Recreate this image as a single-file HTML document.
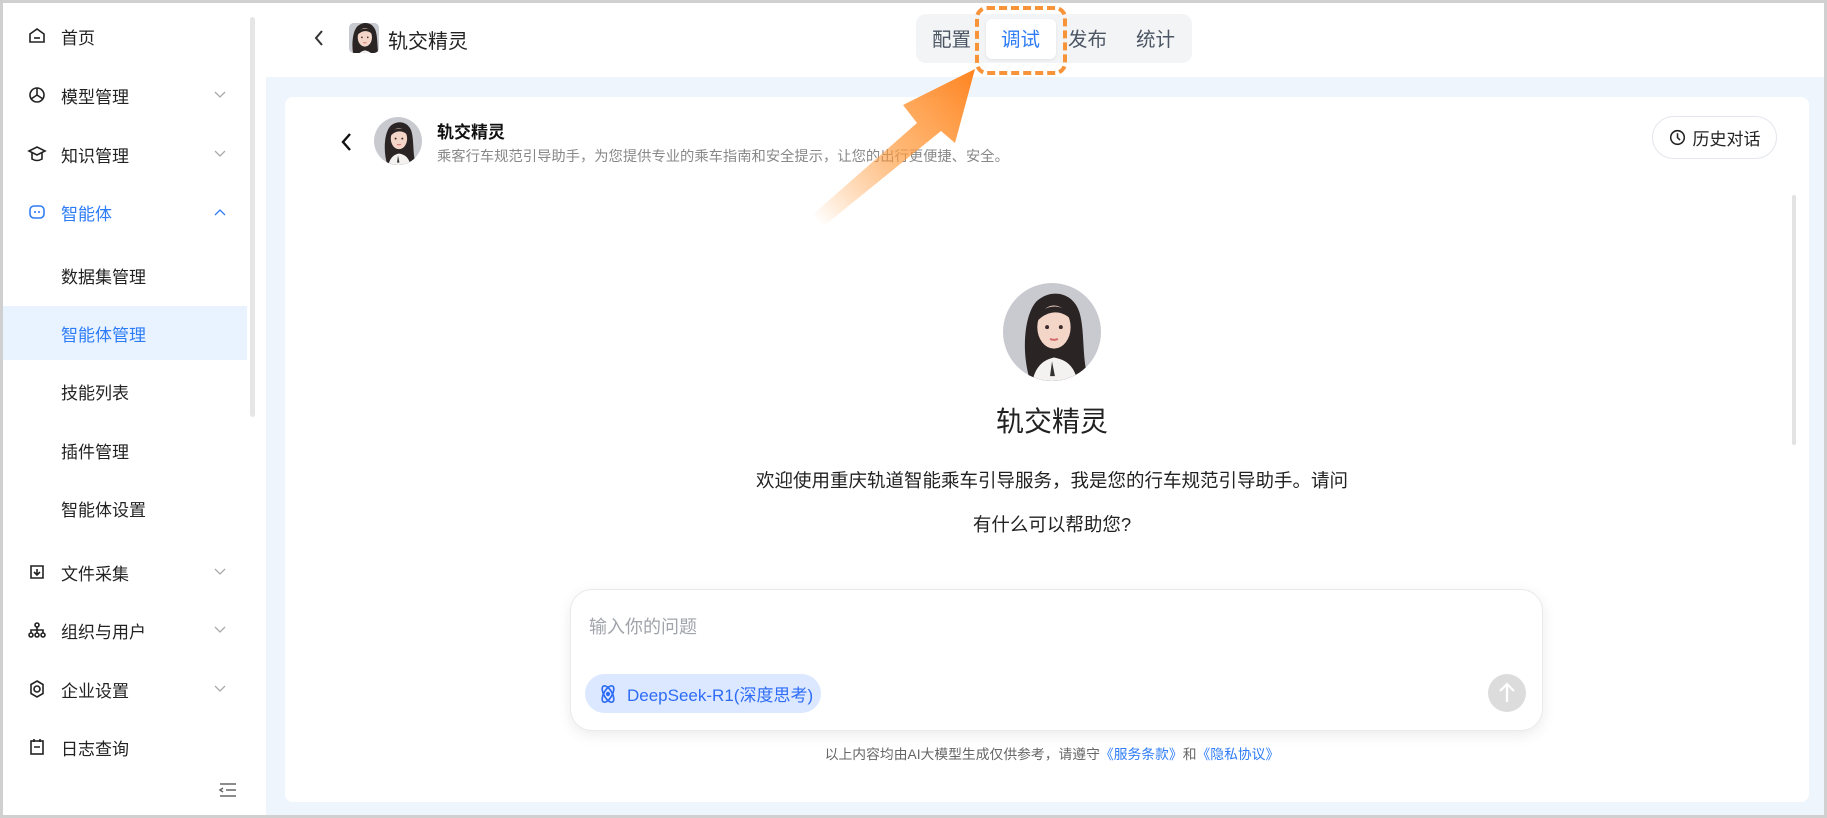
<!DOCTYPE html>
<html><head><meta charset="utf-8"><style>
*{margin:0;padding:0;box-sizing:border-box}
body{width:1827px;height:818px;overflow:hidden;background:#d0d0d0;font-family:"Liberation Sans","Noto Sans CJK SC",sans-serif;position:relative}
.frame{position:absolute;left:3px;top:3px;width:1821px;height:812px;background:#fff;overflow:hidden}
.side{position:absolute;left:0;top:0;width:263px;height:812px;background:#fff}
.mi{position:absolute;left:0;width:244px;height:54px;display:flex;align-items:center;font-size:17px;color:#222}
.mi svg.ic{position:absolute;left:24px}
.mi .t{position:absolute;left:58px}
.mi .ch{position:absolute;left:211px}
.mi.sub .t{left:58px}
.abs{position:absolute}
.main{position:absolute;left:263px;top:74px;width:1558px;height:738px;background:#eef5fd}
.card{position:absolute;left:282px;top:94px;width:1524px;height:705px;background:#fff;border-radius:8px}
</style></head><body>
<svg width="0" height="0" style="position:absolute"><defs>
<clipPath id="cc"><circle cx="50" cy="50" r="50"/></clipPath>
<g id="av"><g clip-path="url(#cc)">
<rect width="100" height="100" fill="#c9cad0"/>
<path d="M28 100 C18 70 22 30 35 18 C50 5 72 10 78 30 C84 50 80 80 88 100Z" fill="#2b2424"/>
<ellipse cx="52" cy="45" rx="17" ry="22" fill="#f3d6c8"/>
<path d="M34 40 C36 20 66 18 70 38 C62 28 46 26 34 40Z" fill="#2b2424"/>
<path d="M30 100 C34 82 44 78 52 76 C62 78 72 82 76 100Z" fill="#f4f2f0"/>
<path d="M50 80 L48 95 L53 95Z" fill="#333"/>
<circle cx="45" cy="45" r="2" fill="#3a2a2a"/><circle cx="59" cy="45" r="2" fill="#3a2a2a"/>
<path d="M48 57 Q52 59 56 57" stroke="#d46a6a" stroke-width="2" fill="none"/>
</g></g>
</defs></svg>
<div class="frame">
<div class="side">
 <div class="abs" style="left:247px;top:14px;width:5px;height:400px;background:#e6e6e6;border-radius:3px"></div>
 <div class="mi" style="top:6px"><svg class="ic" width="20" height="20" viewBox="0 0 20 20" fill="none" stroke="#222" stroke-width="1.6"><path d="M3 8 L10 3 L17 8 V16 H3Z"/><path d="M7 12 H13"/></svg><span class="t">首页</span></div>
 <div class="mi" style="top:65px"><svg class="ic" width="20" height="20" viewBox="0 0 20 20" fill="none" stroke="#222" stroke-width="1.6"><circle cx="10" cy="10" r="7"/><path d="M10 3 V10 L4 14 M10 10 L16 14"/></svg><span class="t">模型管理</span><svg class="ch" width="12" height="8" viewBox="0 0 12 8" fill="none" stroke="#aaa" stroke-width="1.3"><path d="M1 1 L6 6 L11 1"/></svg></div>
 <div class="mi" style="top:124px"><svg class="ic" width="20" height="20" viewBox="0 0 20 20" fill="none" stroke="#222" stroke-width="1.6"><path d="M2 7 L10 3 L18 7 L10 11Z"/><path d="M5 9 V15 Q10 18 15 15 V9"/></svg><span class="t">知识管理</span><svg class="ch" width="12" height="8" viewBox="0 0 12 8" fill="none" stroke="#aaa" stroke-width="1.3"><path d="M1 1 L6 6 L11 1"/></svg></div>
 <div class="mi" style="top:182px;color:#2e7cf6"><svg class="ic" width="20" height="20" viewBox="0 0 20 20" fill="none" stroke="#2e7cf6" stroke-width="1.6"><rect x="3" y="4" width="14" height="12" rx="4"/><path d="M8 9 V11 M12 9 V11"/></svg><span class="t">智能体</span><svg class="ch" width="12" height="8" viewBox="0 0 12 8" fill="none" stroke="#2e7cf6" stroke-width="1.3"><path d="M1 7 L6 2 L11 7"/></svg></div>
 <div class="mi sub" style="top:245px"><span class="t">数据集管理</span></div>
 <div class="mi sub" style="top:303px;background:#e8f3ff;color:#2e7cf6"><span class="t">智能体管理</span></div>
 <div class="mi sub" style="top:361px"><span class="t">技能列表</span></div>
 <div class="mi sub" style="top:420px"><span class="t">插件管理</span></div>
 <div class="mi sub" style="top:478px"><span class="t">智能体设置</span></div>
 <div class="mi" style="top:542px"><svg class="ic" width="20" height="20" viewBox="0 0 20 20" fill="none" stroke="#222" stroke-width="1.6"><path d="M4 4 H16 V16 H4Z"/><path d="M10 7 V13 M7 10 L10 13 L13 10"/></svg><span class="t">文件采集</span><svg class="ch" width="12" height="8" viewBox="0 0 12 8" fill="none" stroke="#aaa" stroke-width="1.3"><path d="M1 1 L6 6 L11 1"/></svg></div>
 <div class="mi" style="top:600px"><svg class="ic" width="20" height="20" viewBox="0 0 20 20" fill="none" stroke="#222" stroke-width="1.6"><circle cx="10" cy="5" r="2"/><circle cx="4" cy="15" r="2"/><circle cx="10" cy="15" r="2"/><circle cx="16" cy="15" r="2"/><path d="M10 7 V13 M4 13 V10 H16 V13"/></svg><span class="t">组织与用户</span><svg class="ch" width="12" height="8" viewBox="0 0 12 8" fill="none" stroke="#aaa" stroke-width="1.3"><path d="M1 1 L6 6 L11 1"/></svg></div>
 <div class="mi" style="top:659px"><svg class="ic" width="20" height="20" viewBox="0 0 20 20" fill="none" stroke="#222" stroke-width="1.6"><circle cx="10" cy="10" r="3"/><path d="M10 2 L16 5.5 V14.5 L10 18 L4 14.5 V5.5Z"/></svg><span class="t">企业设置</span><svg class="ch" width="12" height="8" viewBox="0 0 12 8" fill="none" stroke="#aaa" stroke-width="1.3"><path d="M1 1 L6 6 L11 1"/></svg></div>
 <div class="mi" style="top:717px"><svg class="ic" width="20" height="20" viewBox="0 0 20 20" fill="none" stroke="#222" stroke-width="1.6"><rect x="4" y="4" width="12" height="13"/><path d="M7 2 V5 M13 2 V5 M7 10 H13"/></svg><span class="t">日志查询</span></div>
 <div class="abs" style="left:0;top:757px;width:263px;height:55px;background:#fff"></div>
 <svg class="abs" style="left:215px;top:779px" width="20" height="16" viewBox="0 0 20 16" fill="none" stroke="#666" stroke-width="1.5"><path d="M2 2 H18 M8 8 H18 M2 14 H18 M5 6 L2 8 L5 10"/></svg>
</div>
<!-- header -->
<svg class="abs" style="left:310px;top:26px" width="12" height="18" viewBox="0 0 12 18" fill="none" stroke="#333" stroke-width="2"><path d="M9 2 L3 9 L9 16"/></svg>
<svg class="abs" style="left:346px;top:20px;border-radius:5px" width="30" height="30" viewBox="0 0 100 100"><rect width="100" height="100" fill="#c9cad0"/><use href="#av" transform="translate(-20,-15) scale(1.4)"/></svg>
<div class="abs" style="left:385px;top:22px;font-size:20px;color:#222">轨交精灵</div>
<div class="abs" style="left:913px;top:11px;width:276px;height:49px;background:#f3f4f6;border-radius:10px"></div>
<div class="abs" style="left:983px;top:16px;width:70px;height:40px;background:#fff;border-radius:6px;box-shadow:0 1px 3px rgba(0,0,0,.08)"></div>
<div class="abs" style="left:929px;top:20px;font-size:19.5px;color:#4b5563">配置</div>
<div class="abs" style="left:998px;top:20px;font-size:19.5px;color:#2e7cf6">调试</div>
<div class="abs" style="left:1065px;top:20px;font-size:19.5px;color:#4b5563">发布</div>
<div class="abs" style="left:1133px;top:20px;font-size:19.5px;color:#4b5563">统计</div>
<div class="main"></div>
<div class="card">
 <svg class="abs" style="left:55px;top:35px" width="14" height="20" viewBox="0 0 14 20" fill="none" stroke="#111" stroke-width="2.4"><path d="M10 2 L3 10 L10 18"/></svg>
 <svg class="abs" style="left:89px;top:20px" width="48" height="48" viewBox="0 0 100 100"><use href="#av"/></svg>
 <div class="abs" style="left:152px;top:21px;font-size:17px;font-weight:bold;color:#111">轨交精灵</div>
 <div class="abs" style="left:152px;top:48px;font-size:14.3px;color:#888">乘客行车规范引导助手，为您提供专业的乘车指南和安全提示，让您的出行更便捷、安全。</div>
 <div class="abs" style="left:1367px;top:19px;width:125px;height:43px;border:1px solid #e3e6ec;border-radius:22px;display:flex;align-items:center;justify-content:center;font-size:17px;color:#222"><svg width="17" height="17" viewBox="0 0 20 20" fill="none" stroke="#222" stroke-width="1.8" style="margin-right:7px"><circle cx="10" cy="10" r="8"/><path d="M10 5 V10 L13 13"/></svg>历史对话</div>
 <div class="abs" style="left:1507px;top:98px;width:4px;height:250px;background:#e3e3e3;border-radius:2px"></div>
 <svg class="abs" style="left:718px;top:186px" width="98" height="98" viewBox="0 0 100 100"><use href="#av"/></svg>
 <div class="abs" style="left:0;width:1534px;top:303px;text-align:center;font-size:28px;color:#222">轨交精灵</div>
 <div class="abs" style="left:0;width:1534px;top:370px;text-align:center;font-size:18.5px;color:#222">欢迎使用重庆轨道智能乘车引导服务，我是您的行车规范引导助手。请问</div>
 <div class="abs" style="left:0;width:1534px;top:414px;text-align:center;font-size:18.5px;color:#222">有什么可以帮助您?</div>
 <div class="abs" style="left:285px;top:492px;width:973px;height:142px;border:1px solid #eaeaea;border-radius:22px;box-shadow:0 4px 14px rgba(0,0,0,.08);background:#fff"></div>
 <div class="abs" style="left:304px;top:516px;font-size:18px;color:#a0a4ab">输入你的问题</div>
 <div class="abs" style="left:300px;top:577px;width:236px;height:39px;background:#dbe8ff;border-radius:20px;display:flex;align-items:center;font-size:17px;color:#2e6cf6"><svg width="22" height="22" viewBox="0 0 24 24" fill="none" stroke="#2e6cf6" stroke-width="1.8" style="margin:0 8px 0 12px"><ellipse cx="12" cy="12" rx="10" ry="4.5" transform="rotate(60 12 12)"/><ellipse cx="12" cy="12" rx="10" ry="4.5" transform="rotate(-60 12 12)"/><circle cx="12" cy="12" r="1.5" fill="#2e6cf6"/></svg>DeepSeek-R1(深度思考)</div>
 <div class="abs" style="left:1203px;top:577px;width:38px;height:38px;border-radius:50%;background:#dcdcdc"><svg width="38" height="38" viewBox="0 0 38 38" fill="none" stroke="#fff" stroke-width="2.2"><path d="M19 28 V11 M12 17 L19 10 L26 17"/></svg></div>
 <div class="abs" style="left:0;width:1534px;top:646px;text-align:center;font-size:13.8px;color:#666">以上内容均由AI大模型生成仅供参考，请遵守<span style="color:#2e7cf6">《服务条款》</span>和<span style="color:#2e7cf6">《隐私协议》</span></div>
</div>
<!-- annotation -->
<svg class="abs" style="left:0;top:0" width="1821" height="300">
 <defs><linearGradient id="ag" x1="808" y1="213" x2="970" y2="68" gradientUnits="userSpaceOnUse"><stop offset="0" stop-color="#ff8a1f" stop-opacity="0"/><stop offset="0.5" stop-color="#ff9a3c" stop-opacity="0.7"/><stop offset="1" stop-color="#ff8522"/></linearGradient></defs>
 <polygon points="808,213 914,120 900,102 972,66 952,140 938,128 822,222" fill="url(#ag)"/>
</svg>
<div class="abs" style="left:972px;top:3px;width:92px;height:69px;border:4px dashed #f7943a;border-radius:12px"></div>
</div>
</body></html>
